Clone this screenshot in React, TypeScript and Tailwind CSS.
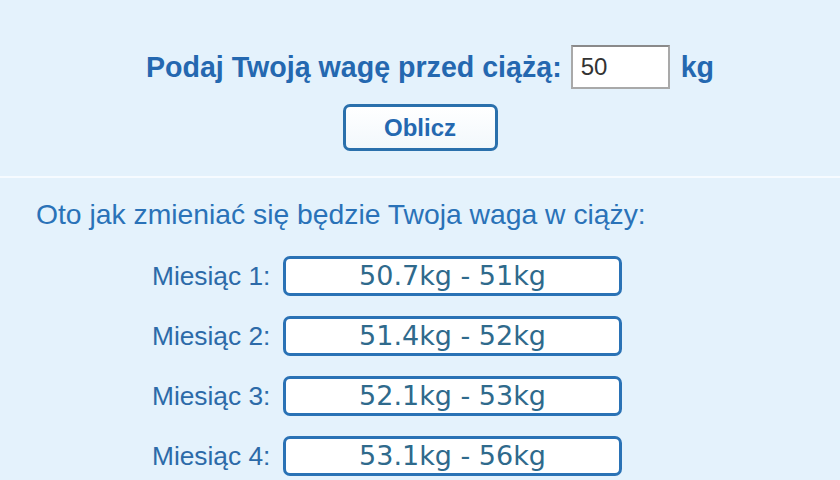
import React from "react";

const rows = [
  { m: 1, v: "50.7kg - 51kg" },
  { m: 2, v: "51.4kg - 52kg" },
  { m: 3, v: "52.1kg - 53kg" },
  { m: 4, v: "53.1kg - 56kg" },
];

export default function App() {
  return (
    <div
      className="w-[840px] h-[480px] overflow-hidden bg-[#e4f2fc] flex flex-col"
      style={{ fontFamily: '"Liberation Sans", Arial, sans-serif' }}
    >
      <div className="flex flex-col items-center pt-[45px]">
        <div className="flex items-center pl-[20px]">
          <span className="text-[28.6px] font-bold text-[#2468b0] leading-none">
            Podaj Twoją wagę przed ciążą:
          </span>
          <div className="ml-[9px] w-[99px] h-[44px] bg-white border-2 border-[#a9a9a9] border-t-[#8a8a8a] flex items-center pl-[8px] text-[24px] text-[#333]">
            50
          </div>
          <span className="ml-[11px] text-[28.6px] font-bold text-[#2468b0] leading-none">
            kg
          </span>
        </div>
        <div className="mt-[15px] w-[155px] h-[47px] rounded-[7px] border-[3px] border-[#2a70ac] bg-gradient-to-b from-white to-[#f2f8fc] flex items-center justify-center text-[24px] font-bold text-[#2468b0]">
          Oblicz
        </div>
      </div>
      <div className="mt-[25px] h-[2px] bg-[#f6fbff]" />
      <div className="pl-[36px] mt-[21px] text-[28.3px] leading-[30px] text-[#2a72b8]">
        Oto jak zmieniać się będzie Twoja waga w ciąży:
      </div>
      <div className="mt-[27px] flex flex-col gap-[20px] pl-[152px]">
        {rows.map((r) => (
          <div key={r.m} className="flex items-center">
            <span className="w-[131px] text-[26.3px] text-[#2c6aa8] leading-none">
              Miesiąc {r.m}:
            </span>
            <div
              className="w-[339px] h-[40px] rounded-[7px] border-[3px] border-[#2a72b5] bg-white flex items-center justify-center text-[27px] text-[#2f6a8c]"
              style={{ fontFamily: '"DejaVu Sans", Verdana, sans-serif' }}
            >
              {r.v}
            </div>
          </div>
        ))}
      </div>
    </div>
  );
}
